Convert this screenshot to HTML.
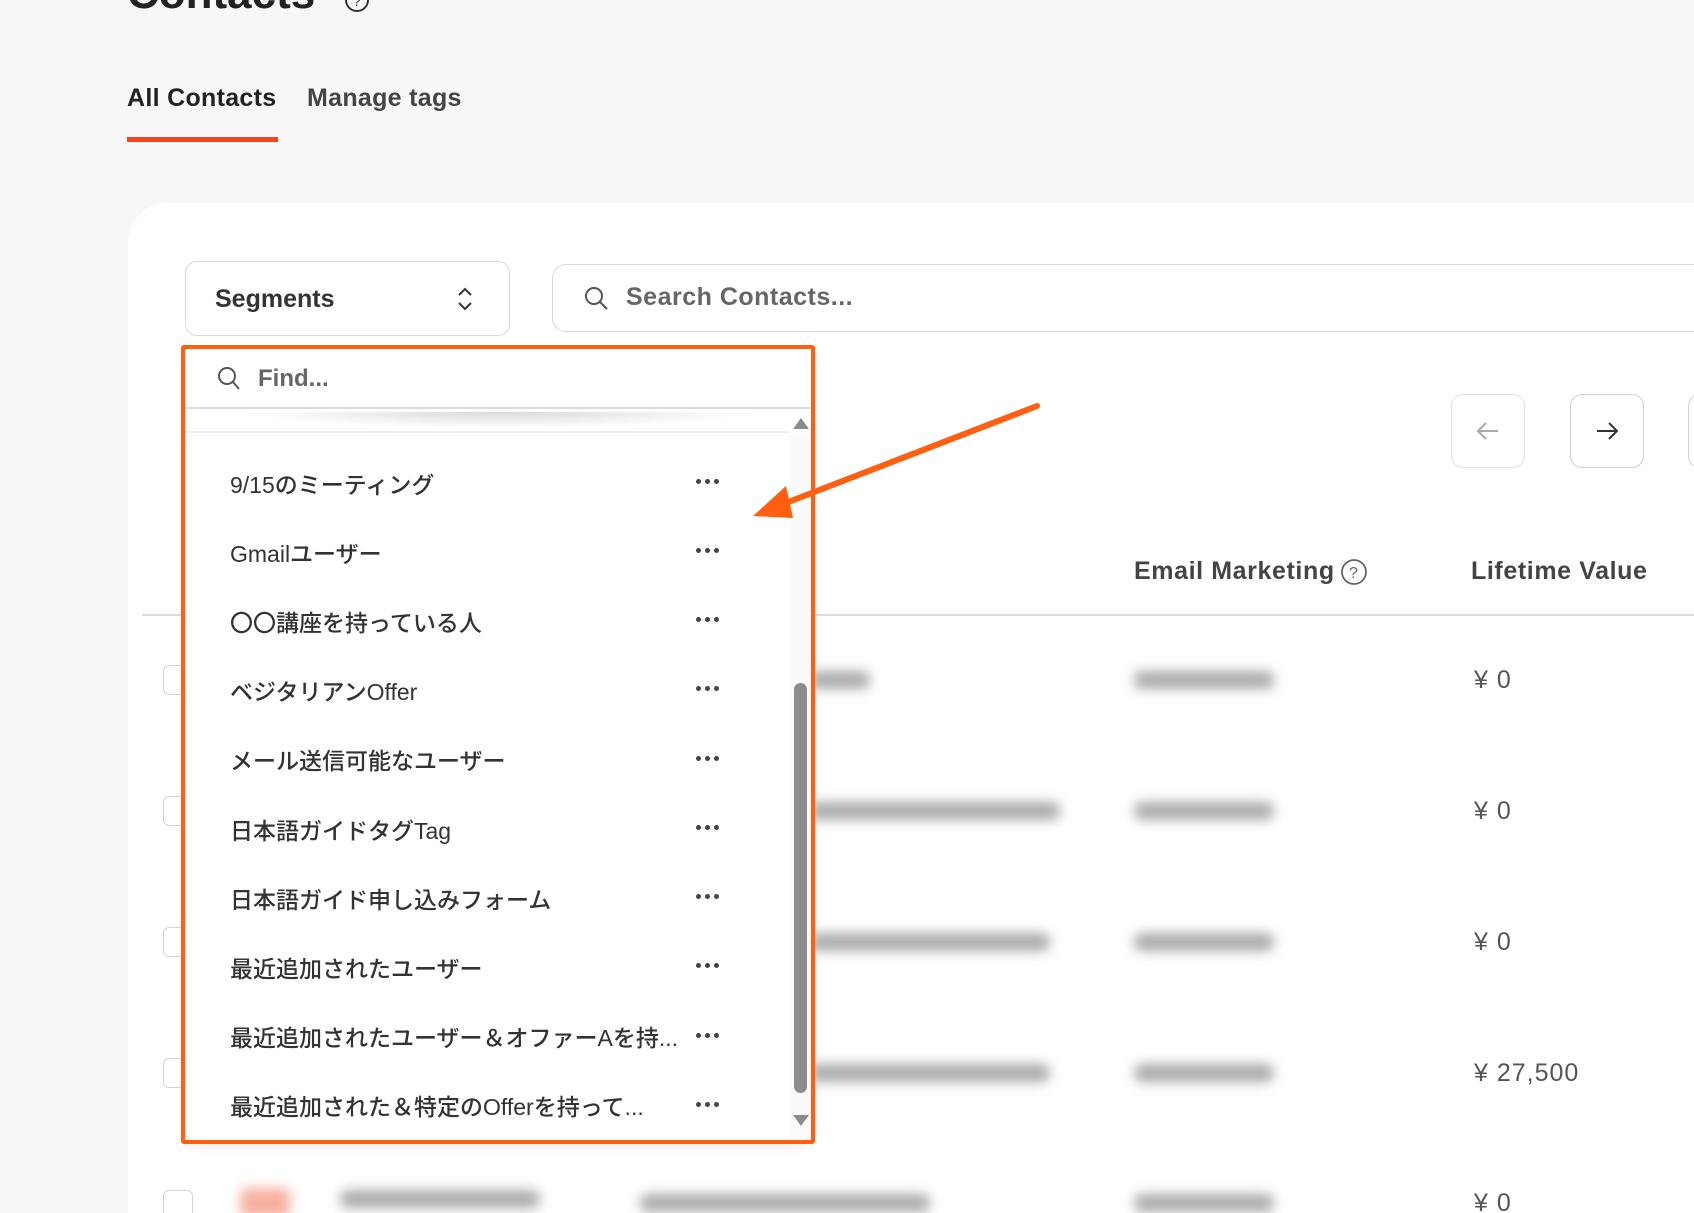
<!DOCTYPE html>
<html><head><meta charset="utf-8"><style>
*{margin:0;padding:0;box-sizing:border-box}
html{width:1694px;height:1213px;overflow:hidden}
body{width:1694px;height:1213px;overflow:hidden;background:#f7f7f7;font-family:"Liberation Sans","Noto Sans CJK JP",sans-serif;color:#333;position:relative}
.a{position:absolute}
.blur{position:absolute;background:#aaa;filter:blur(6px);border-radius:8px;height:18px}
.item{position:absolute;left:230px;font-size:23px;color:#333;font-weight:500}
.dots{position:absolute;left:696px;width:24px;height:6px}
.dots::before,.dots::after,.dots i{content:"";position:absolute;top:0;width:5px;height:5px;border-radius:50%;background:#444}
.dots::before{left:0}.dots i{left:9px}.dots::after{left:18px}
.cb{position:absolute;left:163px;width:30px;height:30px;border:1.5px solid #d5d5d5;border-radius:6px;background:#fff}
.ltv{position:absolute;left:1474px;font-size:25px;color:#555;letter-spacing:1px}
</style></head><body>
<div class="a" style="left:127px;top:-31px;font-size:44px;font-weight:bold;color:#222">Contacts</div>
<svg class="a" style="left:343px;top:-12px" width="28" height="28" viewBox="0 0 28 28"><circle cx="14" cy="12" r="11" fill="none" stroke="#333" stroke-width="2"/><text x="10" y="18" font-size="14" fill="#333" font-family="Liberation Sans">?</text></svg>
<div class="a" style="left:127px;top:84px;font-size:25px;color:#222;font-weight:bold;letter-spacing:0.3px">All Contacts</div>
<div class="a" style="left:307px;top:84px;font-size:25px;color:#444;font-weight:bold;letter-spacing:0.3px">Manage tags</div>
<div class="a" style="left:127px;top:137px;width:151px;height:5px;background:#f4431c"></div>

<div class="a" style="left:128px;top:203px;width:1566px;height:1010px;background:#fff;border-radius:40px 0 0 0"></div>

<div class="a" style="left:185px;top:261px;width:325px;height:75px;border:1.5px solid #d8d8d8;border-radius:12px;background:#fff"></div>
<div class="a" style="left:215px;top:285px;font-size:25px;color:#333;font-weight:bold">Segments</div>
<svg class="a" style="left:455px;top:286px" width="20" height="26" viewBox="0 0 20 26"><path d="M4 9l6-6 6 6M4 17l6 6 6-6" fill="none" stroke="#333" stroke-width="2"/></svg>

<div class="a" style="left:552px;top:264px;width:1200px;height:68px;border:1.5px solid #d8d8d8;border-radius:14px;background:#fff"></div>
<svg class="a" style="left:583px;top:285px" width="28" height="28" viewBox="0 0 28 28"><circle cx="11" cy="11" r="8" fill="none" stroke="#555" stroke-width="2"/><path d="M17 17l7 7" stroke="#555" stroke-width="2"/></svg>
<div class="a" style="left:626px;top:283px;font-size:25px;color:#666;font-weight:bold;letter-spacing:0.5px">Search Contacts...</div>

<div class="a" style="left:1451px;top:394px;width:74px;height:74px;border:1.5px solid #e3e3e3;border-radius:12px;background:#fff"></div>
<svg class="a" style="left:1474px;top:418px" width="28" height="26" viewBox="0 0 28 26"><path d="M24 13H4M12 5l-8 8 8 8" fill="none" stroke="#aaa" stroke-width="2"/></svg>
<div class="a" style="left:1570px;top:394px;width:74px;height:74px;border:1.5px solid #d0d0d0;border-radius:12px;background:#fff"></div>
<svg class="a" style="left:1593px;top:418px" width="28" height="26" viewBox="0 0 28 26"><path d="M4 13h20M16 5l8 8-8 8" fill="none" stroke="#333" stroke-width="2"/></svg>
<div class="a" style="left:1688px;top:394px;width:74px;height:74px;border:1.5px solid #d0d0d0;border-radius:12px;background:#fff"></div>

<div class="a" style="left:1134px;top:557px;font-size:25px;color:#444;font-weight:bold;letter-spacing:0.6px">Email Marketing</div>
<svg class="a" style="left:1340px;top:558px" width="28" height="28" viewBox="0 0 28 28"><circle cx="14" cy="14" r="12" fill="none" stroke="#666" stroke-width="1.8"/><text x="9" y="20" font-size="16" fill="#666" font-family="Liberation Sans">?</text></svg>
<div class="a" style="left:1471px;top:557px;font-size:25px;color:#444;font-weight:bold;letter-spacing:0.6px">Lifetime Value</div>
<div class="a" style="left:142px;top:614px;width:1560px;height:2px;background:#ddd"></div>

<div class="cb" style="top:665px"></div><div class="cb" style="top:796px"></div><div class="cb" style="top:927px"></div><div class="cb" style="top:1058px"></div><div class="cb" style="top:1190px"></div>
<div class="blur" style="left:810px;top:671px;width:60px"></div>
<div class="blur" style="left:810px;top:802px;width:250px"></div>
<div class="blur" style="left:810px;top:933px;width:240px"></div>
<div class="blur" style="left:810px;top:1064px;width:240px"></div>
<div class="blur" style="left:1134px;top:671px;width:140px"></div>
<div class="blur" style="left:1134px;top:802px;width:140px"></div>
<div class="blur" style="left:1134px;top:933px;width:140px"></div>
<div class="blur" style="left:1134px;top:1064px;width:140px"></div>
<div class="blur" style="left:1134px;top:1194px;width:140px"></div>
<div class="blur" style="left:340px;top:1190px;width:200px"></div>
<div class="blur" style="left:640px;top:1194px;width:290px"></div>
<div class="blur" style="left:240px;top:1188px;width:50px;height:30px;background:#f7b0a0"></div>
<div class="ltv" style="top:666px">¥ 0</div>
<div class="ltv" style="top:797px">¥ 0</div>
<div class="ltv" style="top:928px">¥ 0</div>
<div class="ltv" style="top:1059px">¥ 27,500</div>
<div class="ltv" style="top:1189px">¥ 0</div>

<div class="a" style="left:185px;top:348px;width:627px;height:793px;background:#fff;border-radius:0 0 14px 14px;box-shadow:0 4px 12px rgba(0,0,0,.1)"></div>
<div class="a" style="left:185px;top:407px;width:627px;height:2px;background:#ddd"></div>
<div class="a" style="left:240px;top:412px;width:520px;height:16px;background:radial-gradient(ellipse at top,rgba(0,0,0,.15),rgba(0,0,0,0) 70%)"></div>
<div class="a" style="left:185px;top:431px;width:605px;height:2px;background:#eee"></div>
<svg class="a" style="left:216px;top:364px" width="28" height="30" viewBox="0 0 28 30"><circle cx="11" cy="12" r="8" fill="none" stroke="#555" stroke-width="2"/><path d="M17 18l6 7" stroke="#555" stroke-width="2"/></svg>
<div class="a" style="left:258px;top:365px;font-size:24px;color:#666;font-weight:bold">Find...</div>
<div class="a" style="left:790px;top:435px;width:22px;height:700px;background:#fafafa"></div>
<div class="a" style="left:794px;top:683px;width:13px;height:410px;background:#8c8c8c;border-radius:7px"></div>
<svg class="a" style="left:792px;top:416px" width="18" height="14"><path d="M1 13L9 2l8 11z" fill="#8c8c8c"/></svg>
<svg class="a" style="left:792px;top:1114px" width="18" height="14"><path d="M1 1l8 11 8-11z" fill="#8c8c8c"/></svg>

<div class="item" style="top:466px">9/15のミーティング</div><div class="dots" style="top:479px"><i></i></div>
<div class="item" style="top:535px">Gmailユーザー</div><div class="dots" style="top:548px"><i></i></div>
<div class="item" style="top:604px">〇〇講座を持っている人</div><div class="dots" style="top:617px"><i></i></div>
<div class="item" style="top:673px">ベジタリアンOffer</div><div class="dots" style="top:686px"><i></i></div>
<div class="item" style="top:742px">メール送信可能なユーザー</div><div class="dots" style="top:756px"><i></i></div>
<div class="item" style="top:812px">日本語ガイドタグTag</div><div class="dots" style="top:825px"><i></i></div>
<div class="item" style="top:881px">日本語ガイド申し込みフォーム</div><div class="dots" style="top:894px"><i></i></div>
<div class="item" style="top:950px">最近追加されたユーザー</div><div class="dots" style="top:963px"><i></i></div>
<div class="item" style="top:1019px">最近追加されたユーザー＆オファーAを持...</div><div class="dots" style="top:1033px"><i></i></div>
<div class="item" style="top:1088px">最近追加された＆特定のOfferを持って...</div><div class="dots" style="top:1102px"><i></i></div>

<div class="a" style="left:181px;top:345px;width:634px;height:799px;border:4px solid #ff5f0f;border-radius:3px"></div>
<svg class="a" style="left:0;top:0" width="1694" height="1213"><path d="M1037 406L778 506" stroke="#ff5f0f" stroke-width="6" stroke-linecap="round"/><path d="M753 516L786 486L793 518Z" fill="#ff5f0f"/></svg>
</body></html>
